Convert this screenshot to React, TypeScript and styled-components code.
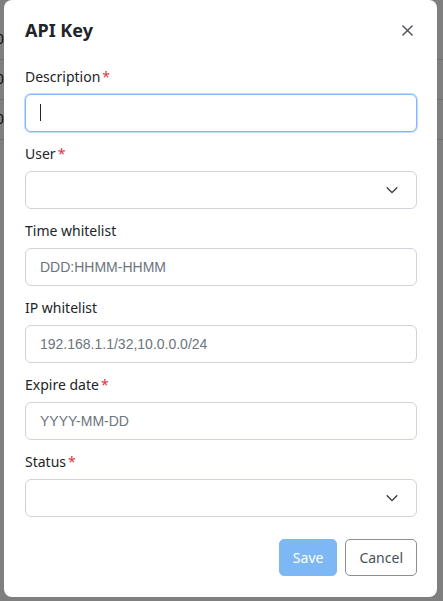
import React from 'react';
import styled, { createGlobalStyle } from 'styled-components';

const GlobalStyle = createGlobalStyle`
  html, body {
    margin: 0;
    padding: 0;
    background: #ffffff;
    font-family: 'Noto Sans', 'Open Sans', sans-serif;
    overflow: hidden;
  }
`;

type Field = {
  label: string;
  required?: boolean;
  kind: 'input' | 'select';
  placeholder?: string;
  focused?: boolean;
};

const fields: Field[] = [
  { label: 'Description', required: true, kind: 'input', focused: true },
  { label: 'User', required: true, kind: 'select' },
  { label: 'Time whitelist', kind: 'input', placeholder: 'DDD:HHMM-HHMM' },
  { label: 'IP whitelist', kind: 'input', placeholder: '192.168.1.1/32,10.0.0.0/24' },
  { label: 'Expire date', required: true, kind: 'input', placeholder: 'YYYY-MM-DD' },
  { label: 'Status', required: true, kind: 'select' },
];

const Chevron = () => (
  <svg width="14" height="14" viewBox="0 0 16 16" fill="none">
    <path d="M2.5 5.5 8 11l5.5-5.5" stroke="#343a40" strokeWidth="1.6" strokeLinecap="round" strokeLinejoin="round" />
  </svg>
);

const CloseIcon = () => (
  <svg width="11" height="11" viewBox="0 0 12 12" fill="none">
    <path d="M1 1l10 10M11 1 1 11" stroke="#4f545a" strokeWidth="1.6" strokeLinecap="round" />
  </svg>
);

const App: React.FC = () => {
  return (
    <>
      <GlobalStyle />
      <Page>
        {Array.from({ length: 3 }).map((_, i) => (
          <BgRow key={i}>0</BgRow>
        ))}
      </Page>
      <Backdrop />
      <Modal>
        <Header>
          <Title>API Key</Title>
          <CloseButton aria-label="Close">
            <CloseIcon />
          </CloseButton>
        </Header>
        <Body>
          {fields.map((f) => (
            <FieldBlock key={f.label}>
              <Label>
                {f.label}
                {f.required && <Star>*</Star>}
              </Label>
              {f.kind === 'input' ? (
                <InputWrap>
                  <TextInput focused={!!f.focused} placeholder={f.placeholder} readOnly />
                  {f.focused && <Caret />}
                </InputWrap>
              ) : (
                <SelectBox>
                  <Chevron />
                </SelectBox>
              )}
            </FieldBlock>
          ))}
        </Body>
        <Footer>
          <Button variant="primary" disabled>
            Save
          </Button>
          <Button variant="outline">Cancel</Button>
        </Footer>
      </Modal>
    </>
  );
};

export default App;

const Page = styled.div`
  padding-top: 20px;
  font-family: 'Liberation Sans', sans-serif;
  font-size: 14px;
  color: #212529;
`;

const BgRow = styled.div`
  height: 39px;
  line-height: 39px;
  border-bottom: 1px solid #dee2e6;
  margin-left: -4px;
`;

const Backdrop = styled.div`
  position: fixed;
  inset: 0;
  background: rgba(0, 0, 0, 0.5);
`;

const Modal = styled.div`
  position: fixed;
  top: 0;
  left: 4px;
  width: 433px;
  height: 597px;
  box-sizing: border-box;
  background: #fff;
  border-radius: 8px;
  padding: 0 20px 0 21px;
  display: flex;
  flex-direction: column;
`;

const Header = styled.div`
  height: 60px;
  display: flex;
  align-items: center;
  justify-content: space-between;
`;

const Title = styled.h1`
  margin: 0;
  font-size: 18px;
  font-weight: 700;
  color: #212529;
`;

const CloseButton = styled.button`
  border: none;
  background: transparent;
  padding: 0;
  margin-right: 3px;
  display: flex;
  align-items: center;
  justify-content: center;
  width: 14px;
  height: 14px;
`;

const Body = styled.div`
  padding-top: 7px;
  display: flex;
  flex-direction: column;
`;

const FieldBlock = styled.div`
  display: flex;
  flex-direction: column;
  margin-bottom: 12px;
`;

const Label = styled.label`
  font-size: 14px;
  line-height: 20px;
  color: #212529;
  margin-bottom: 7px;
`;

const Star = styled.span`
  color: #dc3545;
  margin-left: 2px;
`;

const InputWrap = styled.div`
  position: relative;
`;

const TextInput = styled.input<{ focused: boolean }>`
  box-sizing: border-box;
  width: 100%;
  height: 38px;
  padding: 0 14px;
  border-radius: 6px;
  font-family: 'Liberation Sans', Arial, sans-serif;
  font-size: 14px;
  color: #212529;
  outline: none;
  border: 1px solid ${(p) => (p.focused ? '#86b7fe' : '#ced4da')};
  box-shadow: ${(p) => (p.focused ? '0 0 0 1px rgba(13, 110, 253, 0.25)' : 'none')};

  &::placeholder {
    color: #6c757d;
  }
`;

const Caret = styled.span`
  position: absolute;
  left: 15px;
  top: 10px;
  width: 1px;
  height: 17px;
  background: #212529;
`;

const SelectBox = styled.div`
  box-sizing: border-box;
  height: 38px;
  border: 1px solid #ced4da;
  border-radius: 6px;
  display: flex;
  align-items: center;
  justify-content: flex-end;
  padding-right: 17px;
`;

const Footer = styled.div`
  margin-top: 10px;
  display: flex;
  justify-content: flex-end;
  gap: 8px;
`;

const Button = styled.button<{ variant: 'primary' | 'outline' }>`
  height: 37px;
  padding: 0 13px;
  border-radius: 5px;
  font-family: 'Noto Sans', 'Open Sans', sans-serif;
  font-size: 14px;
  background: ${(p) => (p.variant === 'primary' ? '#7db8f5' : '#fff')};
  color: ${(p) => (p.variant === 'primary' ? '#fff' : '#495057')};
  border: 1px solid ${(p) => (p.variant === 'primary' ? '#7db8f5' : '#8a8f94')};
`;
